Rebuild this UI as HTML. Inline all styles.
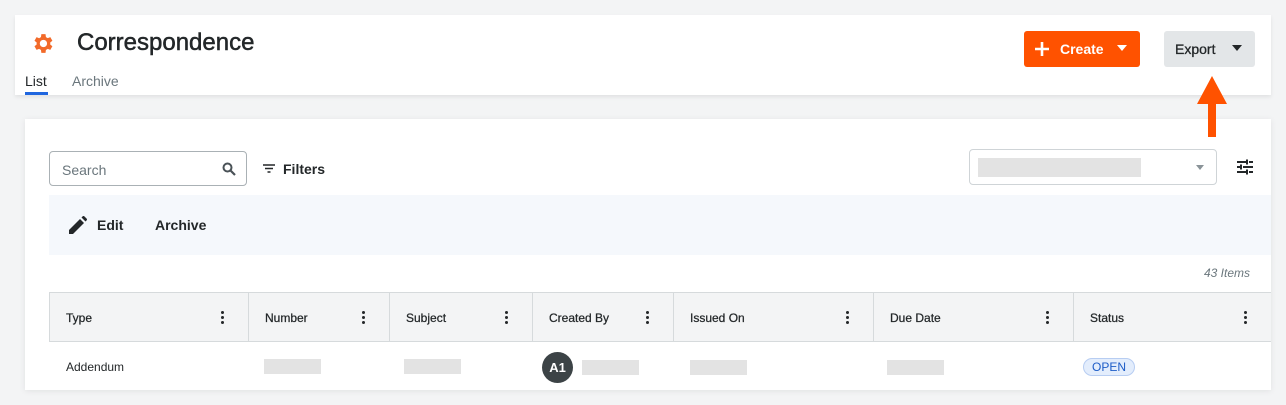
<!DOCTYPE html>
<html><head><meta charset="utf-8"><style>
*{box-sizing:border-box;margin:0;padding:0}
body{width:1286px;height:405px;background:#f3f4f5;font-family:"Liberation Sans",sans-serif;position:relative;overflow:hidden;color:#232729}
.abs{position:absolute}
.hdr{left:15px;top:15px;width:1256px;height:80px;background:#fff;box-shadow:0 2px 4px rgba(0,0,0,.08)}
.card{left:25px;top:119px;width:1246px;height:271px;background:#fff;box-shadow:0 1px 6px rgba(0,0,0,.08)}
.bar{background:#e3e3e3;height:15px}
</style></head><body>
<div class="abs hdr"></div>
<svg class="abs" style="left:30px;top:31px" width="25" height="25" viewBox="0 0 24 24"><path fill="#f26a2a" d="M19.4 13c.04-.33.06-.66.06-1s-.02-.67-.06-1l2.1-1.65-2-3.46-2.48 1a7.6 7.6 0 0 0-1.73-1L14.9 3h-4l-.38 2.9a7.6 7.6 0 0 0-1.73 1l-2.48-1-2 3.46L6.4 11a8 8 0 0 0 0 2l-2.1 1.65 2 3.46 2.48-1c.53.4 1.11.74 1.73 1L10.9 21h4l.38-2.9a7.6 7.6 0 0 0 1.73-1l2.48 1 2-3.46zM12.9 15.5a3.5 3.5 0 1 1 0-7 3.5 3.5 0 0 1 0 7z"/></svg>
<div class="abs" style="left:77px;top:29px;font-size:24px;color:#232729;-webkit-text-stroke:0.5px #232729">Correspondence</div>
<div class="abs" style="left:25px;top:73px;font-size:14px;color:#232729">List</div>
<div class="abs" style="left:25px;top:92px;width:23px;height:3px;background:#2066df"></div>
<div class="abs" style="left:72px;top:73px;font-size:14px;color:#6a767c">Archive</div>
<div class="abs" style="left:1024px;top:31px;width:116px;height:36px;background:#ff5200;border-radius:3px;color:#fff;font-weight:bold;font-size:14px">
<svg class="abs" style="left:10px;top:10px" width="16" height="16"><path d="M8 1v14M1 8h14" stroke="#fff" stroke-width="2.6"/></svg>
<span class="abs" style="left:36px;top:10px">Create</span>
<span class="abs" style="left:93px;top:14px;border:5px solid transparent;border-top:6px solid #fff"></span></div>
<div class="abs" style="left:1164px;top:31px;width:91px;height:36px;background:#e3e6e8;border-radius:3px;font-size:14px">
<span class="abs" style="left:11px;top:10px;-webkit-text-stroke:0.3px #232729">Export</span>
<span class="abs" style="left:68px;top:14px;border:5px solid transparent;border-top:6px solid #232729"></span></div>
<div class="abs card"></div>
<svg class="abs" style="left:1196px;top:76px;z-index:5" width="32" height="62"><polygon points="16,0 31,28 20,28 20,61 12,61 12,28 1,28" fill="#ff5200"/></svg>
<div class="abs" style="left:49px;top:151px;width:198px;height:35px;border:1px solid #aab1b5;border-radius:4px">
<span class="abs" style="left:12px;top:10px;font-size:14px;color:#6a767c">Search</span>
<svg class="abs" style="left:172px;top:10px" width="14" height="14" viewBox="0 0 14 14"><circle cx="5.5" cy="5.5" r="4" stroke="#4a5257" stroke-width="2" fill="none"/><path d="M8.5 8.5L13 13" stroke="#4a5257" stroke-width="2.2"/></svg></div>
<svg class="abs" style="left:263px;top:164px" width="12" height="9"><path d="M0 1h12M2 4.5h8M4.5 8h3" stroke="#232729" stroke-width="1.6"/></svg>
<div class="abs" style="left:283px;top:161px;font-size:14px;font-weight:bold">Filters</div>
<div class="abs" style="left:969px;top:149px;width:248px;height:36px;border:1px solid #cfd4d7;border-radius:4px">
<div class="abs bar" style="left:8px;top:8px;width:163px;height:19px"></div>
<span class="abs" style="left:226px;top:15px;border:4px solid transparent;border-top:5px solid #8a9398"></span></div>
<svg class="abs" style="left:1237px;top:159px" width="16" height="16" viewBox="0 0 16 16"><path d="M0 3h9M12 3h4M0 8h3M6 8h10M0 13h9M12 13h4M10 0.5v5M4 5.5v5M10 10.5v5" stroke="#232729" stroke-width="2"/></svg>
<div class="abs" style="left:49px;top:195px;width:1222px;height:60px;background:#f5f8fc"></div>
<svg class="abs" style="left:69px;top:216px" width="18" height="18" viewBox="0 0 18 18"><path d="M0 14v4h4L15 7l-4-4zM12.5 1.5l4 4 1-1a1.4 1.4 0 0 0 0-2l-2-2a1.4 1.4 0 0 0-2 0z" fill="#232729"/></svg>
<div class="abs" style="left:97px;top:217px;font-size:14px;font-weight:bold">Edit</div>
<div class="abs" style="left:155px;top:217px;font-size:14px;font-weight:bold">Archive</div>
<div class="abs" style="left:1204px;top:266px;font-size:12px;font-style:italic;color:#6a767c">43 Items</div>
<div class="abs" style="left:49px;top:292px;width:1222px;height:50px;background:#f3f4f5;border-top:1px solid #d6dadc;border-bottom:1px solid #d6dadc;border-left:1px solid #d6dadc"></div>
<div id="cols"></div>
<div class="abs" style="left:66px;top:360px;font-size:12px">Addendum</div>
<div class="abs bar" style="left:264px;top:359px;width:57px"></div>
<div class="abs bar" style="left:404px;top:359px;width:57px"></div>
<div class="abs" style="left:542px;top:352px;width:31px;height:31px;border-radius:50%;background:#3c4346;color:#fff;font-weight:bold;font-size:13px;text-align:center;line-height:31px">A1</div>
<div class="abs bar" style="left:582px;top:360px;width:57px"></div>
<div class="abs bar" style="left:690px;top:360px;width:57px"></div>
<div class="abs bar" style="left:887px;top:360px;width:57px"></div>
<div class="abs" style="left:1083px;top:358px;width:52px;height:18px;border-radius:9px;background:#e3edfc;border:1px solid #b7cdf2;color:#1d5cc7;font-size:12px;text-align:center;line-height:16px">OPEN</div>
<script>
var c=[[49,'Type'],[248,'Number'],[389,'Subject'],[532,'Created By'],[673,'Issued On'],[873,'Due Date'],[1073,'Status']];
var ends=[248,389,532,673,873,1073,1271],h='';
c.forEach(function(x,i){
if(i>0)h+='<div class="abs" style="left:'+x[0]+'px;top:293px;width:1px;height:48px;background:#d6dadc"></div>';
h+='<div class="abs" style="left:'+(x[0]+17)+'px;top:311px;font-size:12px;-webkit-text-stroke:0.25px #232729">'+x[1]+'</div>';
h+='<div class="abs" style="left:'+(ends[i]-27)+'px;top:311px;width:3px;font-size:0">'+'<i style="display:block;width:3px;height:3px;background:#232729;border-radius:50%;margin-bottom:2px"></i>'.repeat(3)+'</div>';
});
document.getElementById('cols').innerHTML=h;
</script>
</body></html>
